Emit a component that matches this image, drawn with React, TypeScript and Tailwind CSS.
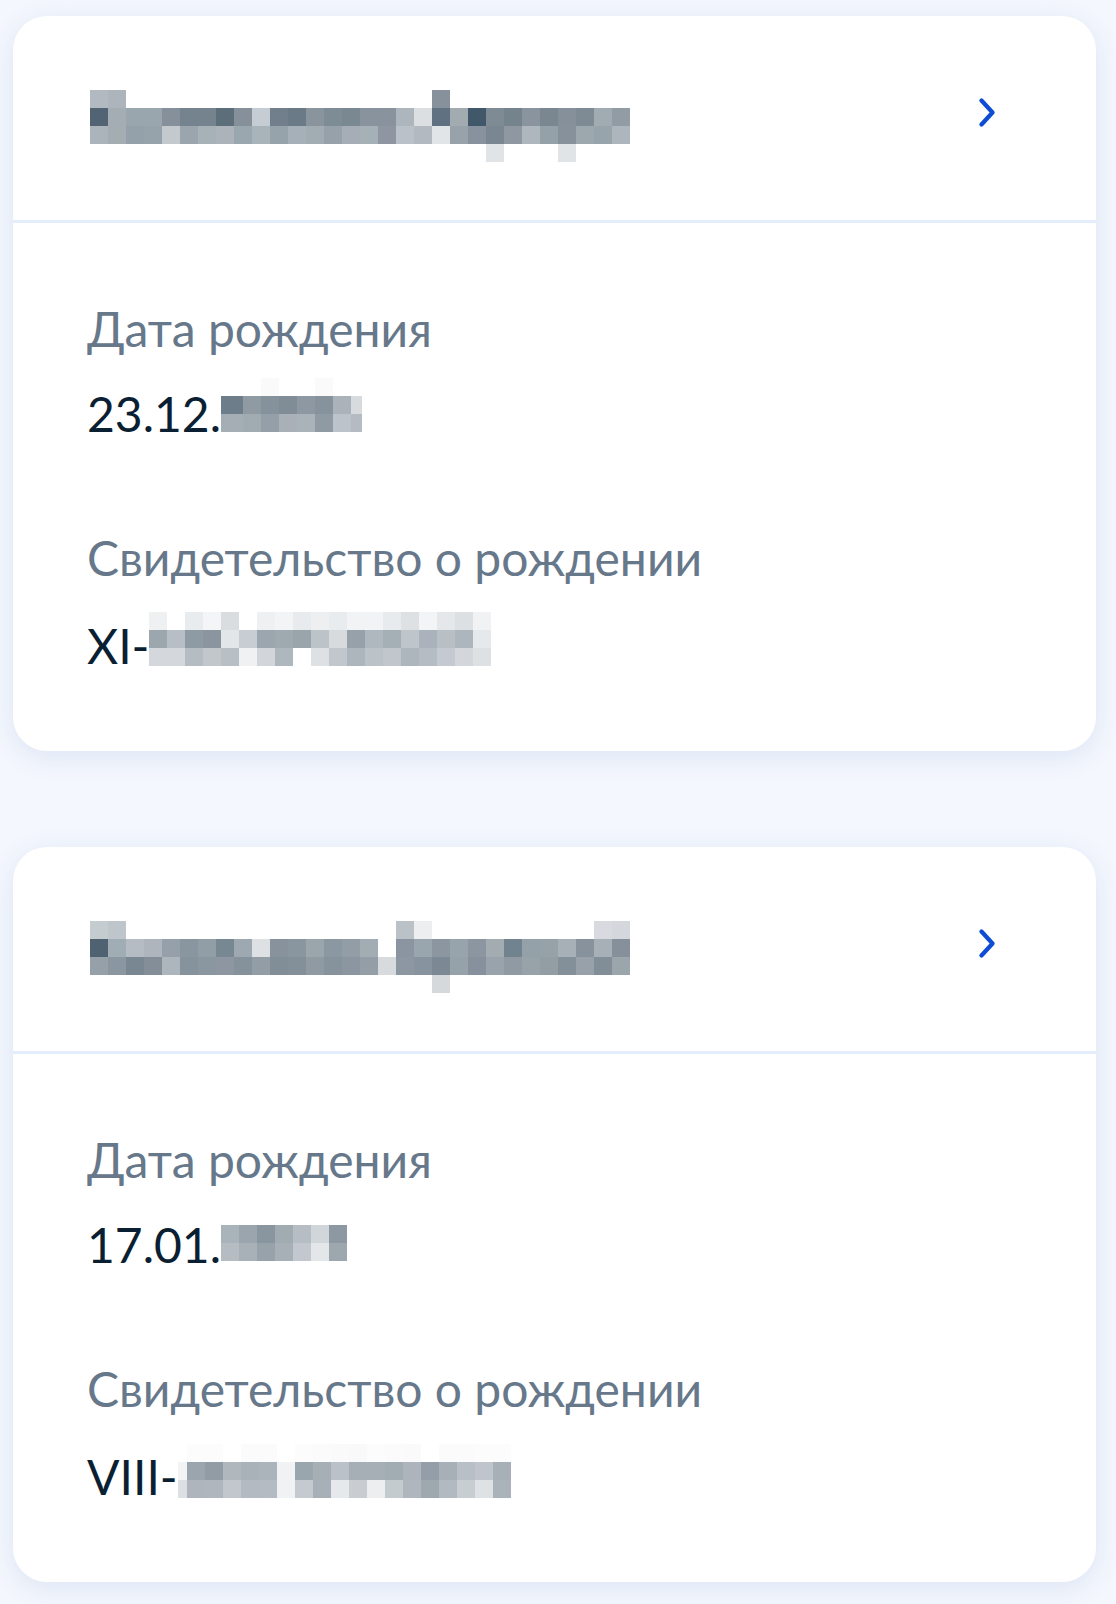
import React from 'react';

type Mosaic = { widths: number[]; rows: string[][] };

const n30 = (cells: Record<number, string>) => Array.from({ length: 30 }, (_, i) => cells[i] ?? '');

const NAME_1: Mosaic = {
  widths: Array(30).fill(18),
  rows: [
    n30({ 0: '#b3b9c0', 1: '#adb4bb', 19: '#87919c' }),
    ['#526474', '#a3adb3', '#9aa6ad', '#9aa6ad', '#86909b', '#74838e', '#74838e', '#5c6e79', '#85909a', '#c5ccd3', '#707f8b', '#6a7a86', '#8a949d', '#7e8c95', '#7a8891', '#89939d', '#89939d', '#adb5bd', '#dcdfe2', '#607181', '#a1abb0', '#41586a', '#7e8a94', '#75838d', '#8a949e', '#7a8690', '#86909b', '#7e8a94', '#a1abb2', '#929ca5'],
    ['#acb4bb', '#a3adb2', '#95a1aa', '#97a3ab', '#c4c9cd', '#9aa5ae', '#a7b2b8', '#adb3bb', '#9aa7ae', '#a9b4ba', '#97a3aa', '#a6b0b8', '#a1adb3', '#97a1aa', '#a5aeb6', '#a5b0b7', '#8e97a1', '#bac1c9', '#b3b9c0', '#e2e5e8', '#97a2ab', '#87929e', '#7a8792', '#8f98a1', '#aeb6be', '#95a1a8', '#86919c', '#9da8ae', '#98a4ab', '#aeb6bd'],
    n30({ 22: '#e0e4e7', 26: '#e0e4e7' }),
  ],
};

const NAME_2: Mosaic = {
  widths: Array(30).fill(18),
  rows: [
    n30({ 0: '#c5ccd0', 1: '#bec5cb', 17: '#bac2c8', 18: '#eceef0', 28: '#d7dbe0', 29: '#d4d8dd' }),
    ['#4e6272', '#a1adb5', '#b5bcc4', '#aeb5bd', '#95a0aa', '#8a969f', '#929ea6', '#788893', '#9ea8b0', '#dde1e4', '#87929c', '#8a969f', '#9aa5ac', '#8c98a1', '#929da5', '#a2acb3', '', '#8a95a1', '#9aa6ad', '#8b96a0', '#98a4ac', '#8b96a0', '#a2acb1', '#728390', '#95a1a9', '#96a1a8', '#a7b0b6', '#87929c', '#a6b0b6', '#86909a'],
    ['#96a0a9', '#8a96a0', '#788791', '#838e99', '#adb5bd', '#86929c', '#8a96a0', '#8e97a1', '#85929b', '#939da6', '#818e98', '#83909a', '#8f9aa2', '#86939c', '#8b96a0', '#939ea6', '#d7dbde', '#8d97a2', '#8893a0', '#7c8994', '#96a2a9', '#87919d', '#98a3ab', '#8f9aa2', '#97a2a9', '#939ea4', '#849099', '#98a0a9', '#818e98', '#9aa5ac'],
    n30({ 19: '#d5d9dc' }),
  ],
};

const DATE_1: Mosaic = {
  widths: [22, 18, 18, 18, 18, 18, 18, 11],
  rows: [
    ['', '', '#fafafa', '', '', '#fafafa', '', ''],
    ['#6e7d8a', '#8f9aa3', '#85919b', '#808d97', '#8d98a2', '#87939c', '#aab2ba', '#d8dbde'],
    ['#a6aeb5', '#a1acb2', '#959fa8', '#a9b0b7', '#a9b3b9', '#8f9aa3', '#bcc3ca', '#b4bbc2'],
  ],
};

const DATE_2: Mosaic = {
  widths: [18, 18, 18, 18, 18, 18, 18],
  rows: [
    ['', '', '', '', '', '', ''],
    ['#a9b3ba', '#9aa5ad', '#8996a0', '#a1abb2', '#b6bdc3', '#d1d6da', '#8e98a2'],
    ['#b5bcc2', '#a8b1b7', '#97a2aa', '#a7b0b6', '#c2c8cd', '#e4e7ea', '#9ea7ae'],
  ],
};

const CERT_1: Mosaic = {
  widths: Array(19).fill(18),
  rows: [
    ['#eef0f2', '', '#e9ecef', '#f4f5f6', '#d9dde0', '', '#eef0f2', '#f3f4f5', '#e8ebed', '#edeff1', '#e9ecee', '#f2f3f5', '#f2f3f5', '#e8ebee', '#dde1e4', '#f3f4f6', '#e5e8eb', '#dce0e3', '#f1f2f4'],
    ['#9ba6ad', '#b7bec5', '#8f9ba4', '#8a959f', '#e3e6e9', '#c7cdd2', '#9ba6ae', '#9ea9b0', '#99a4ab', '#bcc3c9', '#d7dbde', '#96a1aa', '#afb8be', '#a5afb6', '#bec5cb', '#aab3bb', '#b8bfc5', '#aeb6bd', '#e6e9ec'],
    ['#d4d8dc', '#d4d8dc', '#b5bdc3', '#c1c7cb', '#b8bfc5', '#f0f1f3', '#d2d6da', '#aeb7bd', '', '#dde1e4', '#c1c7cd', '#adb6bc', '#bbc2c8', '#c0c6cc', '#aeb6bd', '#b5bcc3', '#c4cacf', '#d3d7db', '#dee1e4'],
  ],
};

const CERT_2: Mosaic = {
  widths: [9, ...Array(18).fill(18)],
  rows: [
    ['', '#fcfcfc', '#fcfcfc', '', '#fbfbfb', '#fbfbfb', '', '#fcfcfc', '#fbfbfb', '#fafafa', '#f9f9f9', '#fcfcfc', '#fbfbfb', '#fafafa', '', '#fbfbfb', '#fafbfa', '#fcfcfc', '#fcfcfc'],
    ['#f2f3f5', '#9aa5ad', '#919ca5', '#b0b8be', '#a8b2b8', '#acb4bb', '#f1f2f4', '#9aa6ad', '#a5afb5', '#bbc1c8', '#a6afb5', '#a6afb5', '#a2acb3', '#adb4bb', '#939ea8', '#a7b0b6', '#b9bfc6', '#bfc5cb', '#a7b0b6'],
    ['#dde0e3', '#aeb5bc', '#afb6bd', '#c1c7cd', '#b3bac1', '#b4bbc2', '#f1f2f4', '#c4cacf', '#a7b0b6', '#e6e9ec', '#c9cdd1', '#eceef0', '#c4cbcf', '#afb6bd', '#9ea8af', '#b2b9c0', '#c8cdd1', '#dfe2e5', '#abb3ba'],
  ],
};

// pixelated (hidden) piece of personal data
const Pixels = ({ m, className = '' }: { m: Mosaic; className?: string }) => (
  <div className={`flex flex-col shrink-0 ${className}`}>
    {m.rows.map((row, r) => (
      <div key={r} className="flex">
        {row.map((c, i) => (
          <div key={i} className="h-[18px]" style={{ width: m.widths[i], backgroundColor: c || 'transparent' }} />
        ))}
      </div>
    ))}
  </div>
);

const Chevron = () => (
  <svg width="16" height="29" viewBox="0 0 16 29" fill="none" className="mt-[82px] mr-[101px] shrink-0">
    <path d="M2.5 2.5L13.5 14.5L2.5 26.5" stroke="#0d4cd3" strokeWidth="4.2" strokeLinecap="round" strokeLinejoin="round" />
  </svg>
);

interface ChildCardProps {
  name: Mosaic;
  dateText: string;
  date: Mosaic;
  dateShift: string;
  certText: string;
  cert: Mosaic;
  certShift: string;
}

const ChildCard = ({ name, dateText, date, dateShift, certText, cert, certShift }: ChildCardProps) => (
  <div className="ml-[13px] w-[1083px] h-[735px] rounded-[34px] bg-white shadow-[0_6px_28px_0_rgba(18,72,170,0.10)] overflow-hidden">
    <div className="h-[204px] flex items-start justify-between pl-[77px]">
      <Pixels m={name} className="mt-[74px]" />
      <Chevron />
    </div>
    <div className="h-[3px] bg-[#e4edfb]" />
    <div className="px-[74px] pt-[77px]">
      <div className="text-[48px] leading-[58px] text-[#66788a]">Дата рождения</div>
      <div className="mt-[27px] h-[58px] flex items-start text-[48px] leading-[58px] text-[#0b1f33] whitespace-nowrap">
        <span>{dateText}</span>
        <Pixels m={date} className={dateShift} />
      </div>
      <div className="mt-[86px] text-[48px] leading-[58px] text-[#66788a]">Свидетельство о рождении</div>
      <div className="mt-[30px] h-[58px] flex items-start text-[48px] leading-[58px] text-[#0b1f33] whitespace-nowrap">
        <span>{certText}</span>
        <Pixels m={cert} className={certShift} />
      </div>
    </div>
  </div>
);

export default function App() {
  return (
    <div className="min-h-[1604px] w-[1116px] bg-[#f4f7fd] pt-4 pb-[23px] flex flex-col gap-[96px] font-[Lato,sans-serif]">
      <ChildCard name={NAME_1} dateText="23.12." date={DATE_1} dateShift="-mt-[7px]" certText="XI-" cert={CERT_1} certShift="-mt-[5px]" />
      <ChildCard name={NAME_2} dateText="17.01." date={DATE_2} dateShift="-mt-[9px]" certText="VIII-" cert={CERT_2} certShift="-mt-[4px]" />
    </div>
  );
}
